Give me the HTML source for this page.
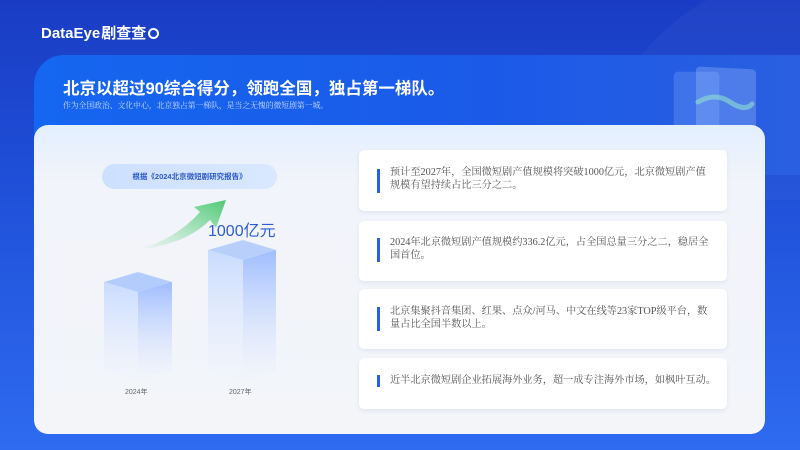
<!DOCTYPE html>
<html><head><meta charset="utf-8"><style>
*{margin:0;padding:0;box-sizing:border-box}
body{width:800px;height:450px;overflow:hidden;position:relative;font-family:"Liberation Sans","Noto Sans CJK SC",sans-serif;
background:linear-gradient(180deg,#1a3cc4 0%,#1f4fd8 40%,#2e6bf0 100%)}
.logo{position:absolute;left:41px;top:22px;color:#fff;font-size:15px;font-weight:bold;letter-spacing:0px}
.band{position:absolute;left:34px;top:55px;width:766px;height:120px;border-radius:30px 0 0 0;
background:linear-gradient(90deg,#1566f0,#1b5ae8 60%,#2a5fe0)}
.title{position:absolute;left:63px;top:75px;color:#fff;font-size:16.5px;font-weight:bold;letter-spacing:0px}
.sub{position:absolute;left:63px;top:100px;color:#c8d8ff;font-size:7.8px;font-family:"Liberation Serif","Noto Serif CJK SC",serif}
.panel{position:absolute;left:34px;top:125px;width:731px;height:309px;border-radius:14px;
background:linear-gradient(180deg,#e3efff 0%,#f1f4fa 18%,#f3f5f9 100%)}
.card{position:absolute;left:359px;width:368px;background:#fff;border-radius:5px;box-shadow:0 2px 5px rgba(40,70,140,.08);
font-family:"Liberation Serif","Noto Serif CJK SC",serif;font-size:10.2px;line-height:13px;color:#555;padding-left:31px;padding-right:14px}
.pill{position:absolute;left:102px;top:164px;width:175px;height:25px;border-radius:13px;background:linear-gradient(90deg,#cde0ff,#d9e8ff);
color:#2b58c8;font-size:7.5px;font-weight:bold;text-align:center;line-height:25px}
.lbl{position:absolute;font-size:7px;color:#666}
</style></head><body>
<div class="logo">DataEye<span style="font-family:'Noto Sans CJK SC',sans-serif;margin-left:1px">剧查查</span><span style="display:inline-block;width:11px;height:11px;border:2.5px solid #fff;border-radius:50%;vertical-align:-1px;margin-left:2px"></span></div>
<svg style="position:absolute;left:400px;top:0" width="400" height="200"><circle cx="420" cy="200" r="230" fill="#ffffff" opacity="0.03"/></svg>
<div class="band"></div>
<svg style="position:absolute;left:670px;top:62px" width="90" height="70">
<rect x="4" y="10" width="45" height="60" rx="4" fill="#8fb4ff" opacity="0.25" stroke="#b9d0ff" stroke-opacity=".4"/>
<rect x="26" y="3" width="60" height="67" rx="4" fill="#a8c6ff" opacity="0.3" transform="skewY(3)"/>
<path d="M28 40 Q45 30 60 40 T82 42" stroke="#8ee0d0" stroke-width="5" fill="none" stroke-linecap="round" opacity=".6"/>
</svg>
<div class="title">北京以超过90综合得分，领跑全国，独占第一梯队。</div>
<div class="sub">作为全国政治、文化中心，北京独占第一梯队，是当之无愧的微短剧第一城。</div>
<div class="panel"></div>
<div class="pill">根据《2024北京微短剧研究报告》</div>
<svg style="position:absolute;left:100px;top:200px" width="200" height="200">
<defs>
<linearGradient id="ar" x1="0" y1="1" x2="1" y2="0"><stop offset="0" stop-color="#7fdc9a" stop-opacity="0"/><stop offset="1" stop-color="#4fc874"/></linearGradient>
<linearGradient id="fl" x1="0" y1="0" x2="0" y2="1"><stop offset="0" stop-color="#c8dbff"/><stop offset="1" stop-color="#eef3fd" stop-opacity=".3"/></linearGradient>
<linearGradient id="fr" x1="0" y1="0" x2="0" y2="1"><stop offset="0" stop-color="#9ebcff"/><stop offset="1" stop-color="#eef3fd" stop-opacity=".3"/></linearGradient>
</defs>
<path d="M36 50 Q75 40 100 12 L94 7 L126 0 L116 28 L110 20 Q85 45 36 50Z" fill="url(#ar)"/>
<polygon points="4,82 38,72 72,82 38,92" fill="#b3ccfb"/>
<polygon points="4,82 38,92 38,180 4,170" fill="url(#fl)"/>
<polygon points="38,92 72,82 72,170 38,180" fill="url(#fr)"/>
<polygon points="108,50 143,40 176,50 143,60" fill="#b8cffb"/>
<polygon points="108,50 143,60 143,180 108,172" fill="url(#fl)"/>
<polygon points="143,60 176,50 176,172 143,180" fill="url(#fr)"/>
</svg>
<div style="position:absolute;left:208px;top:217px;color:#2b5fd0;font-size:16px">1000亿元</div>
<div class="lbl" style="left:125px;top:387px">2024年</div>
<div class="lbl" style="left:229px;top:387px">2027年</div>
<div class="card" style="top:150px;height:61px;padding-top:16px"><span style="position:absolute;left:18px;top:19px;width:3px;height:24px;background:#2860e8"></span>预计至2027年，全国微短剧产值规模将突破1000亿元，北京微短剧产值规模有望持续占比三分之二。</div>
<div class="card" style="top:221px;height:60px;padding-top:15px"><span style="position:absolute;left:18px;top:17px;width:3px;height:24px;background:#2860e8"></span>2024年北京微短剧产值规模约336.2亿元，占全国总量三分之二，稳居全国首位。</div>
<div class="card" style="top:289px;height:60px;padding-top:16px"><span style="position:absolute;left:18px;top:18px;width:3px;height:24px;background:#2860e8"></span>北京集聚抖音集团、红果、点众/河马、中文在线等23家TOP级平台，数量占比全国半数以上。</div>
<div class="card" style="top:358px;height:51px;padding-top:16px;white-space:nowrap"><span style="position:absolute;left:18px;top:17px;width:3px;height:12px;background:#2860e8"></span>近半北京微短剧企业拓展海外业务，超一成专注海外市场，如枫叶互动。</div>
</body></html>
